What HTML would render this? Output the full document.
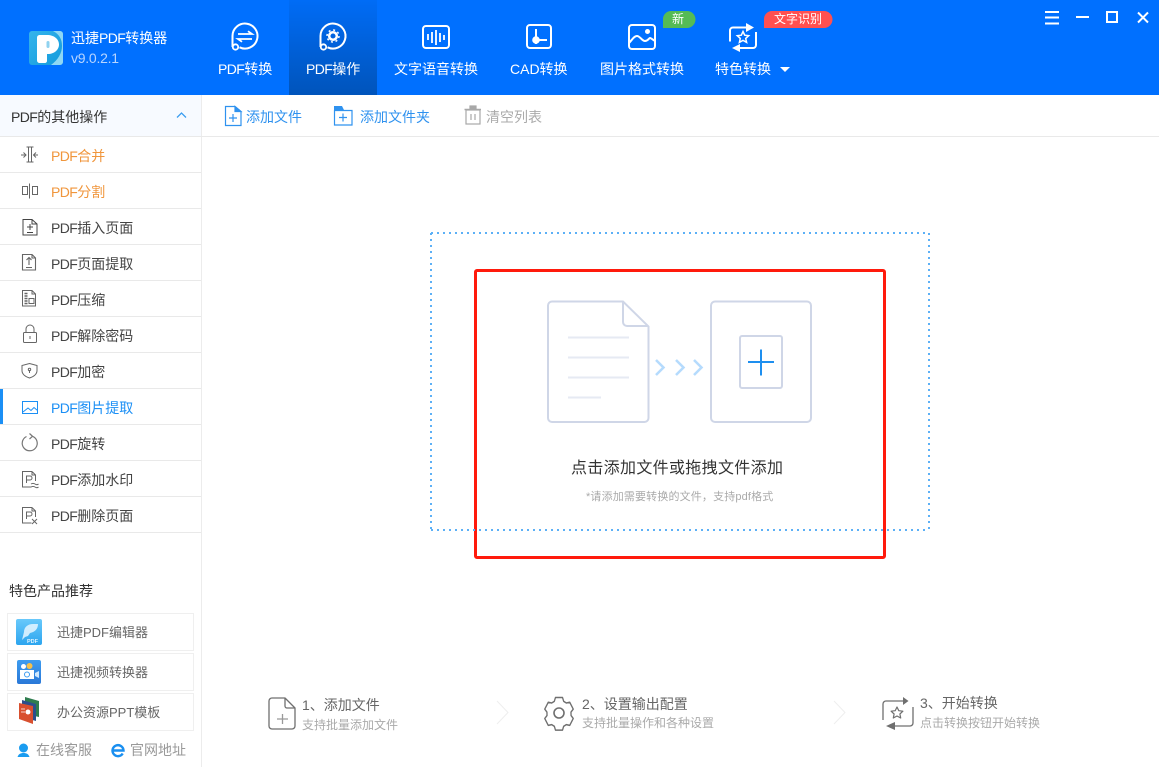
<!DOCTYPE html>
<html><head><meta charset="utf-8">
<style>
html,body{margin:0;padding:0;background:#fff}
body{width:1159px;height:767px;position:relative;overflow:hidden;font-family:"Liberation Sans","Noto Sans CJK SC",sans-serif;font-size:14px;color:#444}
.t{position:absolute;white-space:nowrap;line-height:20px;height:20px}
.a{position:absolute}
svg{position:absolute;overflow:visible;left:0;top:0}
.w{color:#fff}
.p{letter-spacing:-.6px}
.line{position:absolute;left:0;width:201px;height:1px;background:#e9e9e9}
.card{position:absolute;left:7px;width:185px;height:36px;border:1px solid #efefef}
</style></head><body>
<div class="a" style="left:0;top:0;width:1159px;height:95px;background:#0070ff"></div>
<div class="a" style="left:289px;top:0;width:88px;height:95px;background:linear-gradient(#006cf6,#0054bb)"></div>
<div class="a" style="left:0;top:95px;width:201px;height:41px;background:#f7faff"></div>
<div class="a" style="left:201px;top:95px;width:1px;height:672px;background:#ececec"></div>
<div class="a" style="left:0;top:136px;width:1159px;height:1px;background:#e9e9e9"></div>
<div class="line" style="top:172px"></div><div class="line" style="top:208px"></div><div class="line" style="top:244px"></div><div class="line" style="top:280px"></div><div class="line" style="top:316px"></div><div class="line" style="top:352px"></div><div class="line" style="top:388px"></div><div class="line" style="top:424px"></div><div class="line" style="top:460px"></div><div class="line" style="top:496px"></div><div class="line" style="top:532px"></div>
<div class="a" style="left:0;top:389px;width:3px;height:35px;background:#1b8ff5"></div>
<div class="card" style="top:613px"></div><div class="card" style="top:653px"></div><div class="card" style="top:693px"></div>
<div class="a" style="left:474px;top:269px;width:406px;height:284px;border:3px solid #ff1a0c;border-radius:3px"></div>

<svg width="1159" height="767" fill="none" stroke-linecap="butt">
<defs><linearGradient id="lg" x1="0" y1="0" x2="1" y2="1"><stop offset="0" stop-color="#35b4ec"/><stop offset="1" stop-color="#129bdc"/></linearGradient>
<linearGradient id="lg2" x1="0" y1="0" x2="0" y2="1"><stop offset="0" stop-color="#69c9fb"/><stop offset="1" stop-color="#2ca5ef"/></linearGradient>
<linearGradient id="lg3" x1="0" y1="0" x2="0" y2="1"><stop offset="0" stop-color="#3d9cf0"/><stop offset="1" stop-color="#2a78d8"/></linearGradient></defs>
<!-- logo -->
<rect x="29" y="31" width="34" height="34" rx="3" fill="url(#lg)"/>
<path d="M53 31h7a3 3 0 0 1 3 3v28a3 3 0 0 1-3 3h-9c7-5 11-12 11-19 0-7-3-12-9-15z" fill="#8fd8f4"/>
<path d="M37 38c0-2 1-3 3-3h7c7 0 12 4 12 9.500s-5 9.500-11 9.500h-1v7c0 1-1 2-2 2h-5c-2 0-3-1-3-3z" fill="#fff"/>
<rect x="46.500" y="41" width="3" height="7" rx="1.500" fill="#8fd2ef"/>
<!-- nav icons -->
<g stroke="#fff" stroke-width="2">
<path d="M232.500 47V36a12.500 12.500 0 1 1 7 11.300"/><circle cx="235.500" cy="47" r="2.700" stroke-width="1.800"/>
<path d="M238 34h14l-4-2.800M252 39h-14l4 2.800" stroke-width="1.800"/>
<path d="M320.500 47V36a12.500 12.500 0 1 1 7 11.300"/><circle cx="323.500" cy="47" r="2.700" stroke-width="1.800"/>
<circle cx="333" cy="36" r="3.800" stroke-width="2.500"/><circle cx="333" cy="36" r="6" stroke-width="1.500" stroke-dasharray="2 2.700"/>
<rect x="423" y="26" width="26" height="22" rx="3"/>
<path d="M428 34v6M432 32v11M436 30v15M440 33v9M444 35v5" stroke-width="1.800"/>
<rect x="527" y="25" width="24" height="23" rx="3"/>
<path d="M536 29v15M536 40h11"/><circle cx="536" cy="40" r="2.800" fill="#fff"/>
<rect x="629" y="25" width="26" height="24" rx="3"/>
<path d="M629 43c3-3 5-7 8-7s5 5 8 5 4-3 5-3 3 2 5 3"/><circle cx="647.500" cy="31.500" r="2.500" fill="#fff" stroke="none"/>
<path d="M746 27.500h-13a3 3 0 0 0-3 3v11M756 32v13a3 3 0 0 1-3 3h-13"/>
<path d="M746 23l8 4.500-8 4.500zM740 44l-8 4 8 4z" fill="#fff" stroke="none"/>
<path d="M743 31.500l1.700 3.700 4 .5-3 2.700.9 4-3.600-2-3.600 2 .9-4-3-2.700 4-.5z" stroke-width="1.500"/>
</g>
<path d="M780 67h10l-5 5z" fill="#fff"/>
<path d="M663 28v-9a8 8 0 0 1 8-8h16a8 8 0 0 1 0 17z" fill="#55bb55"/>
<path d="M764 28v-9a8 8 0 0 1 8-8h52a8 8 0 0 1 0 17z" fill="#ff5050"/>
<!-- window -->
<path d="M1045 12h14M1045 17.500h14M1045 23.500h14M1076 17h13" stroke="#fff" stroke-width="2"/>
<rect x="1107" y="12" width="10" height="10" stroke="#fff" stroke-width="2"/>
<path d="M1138 12.500l10 10M1148 12.500l-10 10" stroke="#fff" stroke-width="2"/>
<!-- toolbar -->
<path d="M177 117.500l4.500-4.500 4.500 4.500" stroke="#3b9df0" stroke-width="1.300"/>
<g stroke="#2f92ef" stroke-width="1.200"><path d="M235 106.500h-9.500v19h15.500v-14z"/><path d="M235 106.500v5h6z" fill="#2f92ef"/><path d="M229 118h8M233 114v8"/>
<path d="M334.500 110.500h17.500v14.500h-17.500z"/><path d="M334 106h8l2 4h-10z" fill="#2f92ef" stroke="none"/><path d="M339 117.500h8M343 113.500v8"/></g>
<g stroke="#a8a8a8" stroke-width="1.200"><rect x="466" y="110" width="14" height="14"/><path d="M471 114v6M475 114v6"/><path d="M464.500 109.500h16.500" stroke-width="1.500"/><rect x="470" y="106" width="6" height="3" fill="#a8a8a8"/></g>
<!-- sidebar icons -->
<g stroke="#666" stroke-width="1">
<path d="M28.500 147v15M31.500 147v15M26.500 147h7M26.500 162h7M21 155h5M23.500 152.500l2.500 2.500-2.500 2.500M38 155h-4.500M36 152.500l-2.500 2.500 2.500 2.500"/>
<rect x="22.500" y="186.500" width="5" height="8"/><rect x="32.500" y="186.500" width="5" height="8"/><path d="M29.500 183.500v15"/>
<g stroke="#444"><path d="M32 219.500h-9v15.500h14v-11zM32 219.500v4.500h5"/><path d="M27 227h6M30 224v6M27 232.500h6"/></g>
<path d="M32 254.500h-9.500v15.500h13v-12zM32 254.500v3.500h3.500M29 265v-7M26.500 260l2.500-2.500 2.500 2.500M26 267.500h6" stroke-width="1.100"/>
<path d="M32 290.500h-9.500v15.500h13v-12zM32 290.500v3.500h3.500"/>
<path d="M24.500 293.500h3M24.500 296h3M24.500 298.500h3M24.500 301h3M24.500 303.500h3" stroke-width="1.400"/>
<path d="M29 298.500h5v5h-5z" stroke-width="1"/>
<rect x="23.500" y="332.500" width="13" height="10" rx="1"/><path d="M26 332v-3a4 4 0 0 1 8 0v3M30 336v3"/>
<path d="M29.500 363.500l7.500 2v5c0 3.500-3 6-7.500 7.500-4.500-1.500-7.500-4-7.500-7.500v-5z"/><path d="M29.500 370v3"/><circle cx="29.500" cy="369.500" r="1.200"/>
<g stroke="#1b8ff5"><rect x="22.500" y="401.500" width="15" height="12"/><path d="M23 412l5-4 3 2.500 3-3 3.500 3"/></g>
<path d="M26.500 436.500a7.500 7.500 0 1 0 6-.2M29.500 433.500l3 2.800-3 2.700" stroke="#777" stroke-width="1.200"/>
<path d="M32 471.500h-9.500v15.500h9M32 471.500l3.500 3.500v6M32 471.500v3.500h3.500M26.500 483v-7h3.500a2 2 0 0 1 0 4h-3.500M31 484c1.500-1 2.500-1 4 0s2.500 1 3.500 0M31 487c1.500-1 2.500-1 4 0s2.500 1 3.500 0"/>
<path d="M32 507.500h-9.500v15.500h9M32 507.500l3.500 3.500v6M32 507.500v3.500h3.500M26.500 519v-7h3.500a2 2 0 0 1 0 4h-3.500M32 519l5 5M37 519l-5 5"/>
</g>
<!-- dotted -->
<path d="M431 233H929M431 530H929M431 233V531M929 233V531" stroke="#5cb0f6" stroke-width="2" stroke-dasharray="2 4"/>
<!-- illustration -->
<g stroke="#cfd6e7" stroke-width="2"><path d="M623 301.500H552a4 4 0 0 0-4 4V418a4 4 0 0 0 4 4h92.500a4 4 0 0 0 4-4V326.500z"/>
<path d="M623 301.500V322a4 4 0 0 0 4 4h21.500"/>
<rect x="711" y="301.500" width="100" height="120.500" rx="4"/><rect x="740" y="336" width="42" height="52" rx="2"/></g>
<path d="M568 337.500h61M568 357.500h61M568 377.500h61M568 397.500h33" stroke="#e6eaf3" stroke-width="2"/>
<path d="M656 360l7.500 7.500-7.500 7.500M676 360l7.500 7.500-7.500 7.500M694 360l7.500 7.500-7.500 7.500" stroke="#b5dbfd" stroke-width="2.500"/>
<path d="M748 362h26M761 349.500v26" stroke="#1e8fef" stroke-width="2"/>
<!-- products -->
<rect x="16" y="619" width="26" height="26" rx="2" fill="url(#lg2)"/>
<path d="M22 640l2-8c0-5 4-8 9-8h5c0 5-3 8-8 9l-2 3-3 1z" fill="#dff3ff" opacity=".9"/>
<text x="27" y="643" font-size="5.500" font-weight="bold" fill="#dff3ff">PDF</text>
<rect x="17" y="660" width="24" height="24" rx="2" fill="url(#lg3)"/>
<rect x="20" y="670" width="14" height="9" fill="#fff"/><circle cx="23.500" cy="666.500" r="2.500" fill="#fff"/><circle cx="29.500" cy="666" r="3" fill="#f5c04a"/><path d="M35 673l4-2v7l-4-2z" fill="#cfe8ff"/><circle cx="27" cy="674.500" r="2.500" stroke="#3d9cf0"/>
<path d="M25 697l14 4v16l-14-3z" fill="#2f7d4f"/><path d="M22 700l14 4v17l-14-4z" fill="#2b4f8c"/><path d="M19 703l14 3v18l-14-5z" fill="#d8502f"/><circle cx="28" cy="712" r="2.500" fill="#fff"/><path d="M21 709h4M21 712h4" stroke="#fff" stroke-width=".8"/>
<circle cx="23.500" cy="748" r="4.500" fill="#1a9cf0"/><path d="M17.500 757c1-3 3-4 6-4s5 1 6 4z" fill="#1a9cf0"/>
<path d="M113 750.500h10.500a5.500 5.500 0 1 0-.8 3" stroke="#1a8ff0" stroke-width="2.400"/>
<!-- steps -->
<g stroke="#6f6f6f" stroke-width="1.300" stroke-linejoin="round">
<path d="M285 698h-13a3 3 0 0 0-3 3v25a3 3 0 0 0 3 3h20a3 3 0 0 0 3-3v-18z"/><path d="M285 698v8a2 2 0 0 0 2 2h8"/><path d="M277 719h11M282.500 714v10" stroke="#999"/>
<circle cx="559" cy="713" r="5" stroke-width="1.600"/>
<path d="M555 698h8l1.300 3.800 3 1.700 3.900-.8 4 6.900-2.600 3 .1 3.400 2.500 3-4 6.900-3.900-.8-3 1.700-1.300 3.800h-8l-1.300-3.800-3-1.700-3.900.8-4-6.900 2.600-3-.1-3.400-2.500-3 4-6.900 3.900.8 3-1.700z" stroke-width="1.500" transform="translate(559 713) scale(.88 1) translate(-559 -713.500)"/>
<path d="M903 701H886a3 3 0 0 0-3 3v16M913 707v16a3 3 0 0 1-3 3H895"/>
<path d="M903 697l5.500 4-5.500 4zM895 722l-9 4 9 4z" fill="#6f6f6f" stroke="none"/>
<path d="M897 707l1.800 3.700 4.100.5-3 2.800.8 4-3.700-2-3.700 2 .8-4-3-2.800 4.100-.5z" stroke-width="1.200"/>
</g>
<path d="M497 701l11 11.500-11 11.500M834 701l11 11.500-11 11.500" stroke="#eeeeee" stroke-width="1"/>
</svg>

<!-- header text -->
<div class="t w" style="left:71px;top:28px">迅捷<span class="p">PDF</span>转换器</div>
<div class="t" style="left:71px;top:48px;color:#b7d5ff;letter-spacing:-.25px">v9.0.2.1</div>
<div class="t w" style="left:218px;top:59px"><span class="p">PDF</span>转换</div>
<div class="t w" style="left:306px;top:59px"><span class="p">PDF</span>操作</div>
<div class="t w" style="left:394px;top:59px">文字语音转换</div>
<div class="t w" style="left:510px;top:59px">CAD转换</div>
<div class="t w" style="left:600px;top:59px">图片格式转换</div>
<div class="t w" style="left:715px;top:59px">特色转换</div>
<div class="t w" style="left:672px;top:9px;font-size:12px">新</div>
<div class="t w" style="left:774px;top:9px;font-size:12px">文字识别</div>
<!-- toolbar text -->
<div class="t" style="left:11px;top:107px;color:#333"><span class="p">PDF</span>的其他操作</div>
<div class="t" style="left:246px;top:107px;color:#2f92ef">添加文件</div>
<div class="t" style="left:360px;top:107px;color:#2f92ef">添加文件夹</div>
<div class="t" style="left:486px;top:107px;color:#aaa">清空列表</div>
<!-- side items -->
<div class="t" style="left:51px;top:146px;color:#f0963c"><span class="p">PDF</span>合并</div>
<div class="t" style="left:51px;top:182px;color:#f0963c"><span class="p">PDF</span>分割</div>
<div class="t" style="left:51px;top:218px"><span class="p">PDF</span>插入页面</div>
<div class="t" style="left:51px;top:254px"><span class="p">PDF</span>页面提取</div>
<div class="t" style="left:51px;top:290px"><span class="p">PDF</span>压缩</div>
<div class="t" style="left:51px;top:326px"><span class="p">PDF</span>解除密码</div>
<div class="t" style="left:51px;top:362px"><span class="p">PDF</span>加密</div>
<div class="t" style="left:51px;top:398px;color:#1b8ff5"><span class="p">PDF</span>图片提取</div>
<div class="t" style="left:51px;top:434px"><span class="p">PDF</span>旋转</div>
<div class="t" style="left:51px;top:470px"><span class="p">PDF</span>添加水印</div>
<div class="t" style="left:51px;top:506px"><span class="p">PDF</span>删除页面</div>
<div class="t" style="left:9px;top:581px;color:#333">特色产品推荐</div>
<div class="t" style="left:57px;top:623px;font-size:13px;color:#666">迅捷PDF编辑器</div>
<div class="t" style="left:57px;top:663px;font-size:13px;color:#666">迅捷视频转换器</div>
<div class="t" style="left:57px;top:703px;font-size:13px;color:#666">办公资源PPT模板</div>
<div class="t" style="left:36px;top:740px;color:#999">在线客服</div>
<div class="t" style="left:130px;top:740px;color:#999">官网地址</div>
<!-- center text -->
<div class="t" style="left:571px;top:459px;font-size:16px;letter-spacing:.33px;color:#333">点击添加文件或拖拽文件添加</div>
<div class="t" style="left:586px;top:487px;font-size:11px;letter-spacing:.15px;color:#aaa">*请添加需要转换的文件，支持pdf格式</div>
<!-- steps text -->
<div class="t" style="left:302px;top:695px;color:#666">1、添加文件</div>
<div class="t" style="left:302px;top:715px;font-size:12px;color:#aaa">支持批量添加文件</div>
<div class="t" style="left:582px;top:694px;color:#666">2、设置输出配置</div>
<div class="t" style="left:582px;top:713px;font-size:12px;color:#aaa">支持批量操作和各种设置</div>
<div class="t" style="left:920px;top:693px;color:#666">3、开始转换</div>
<div class="t" style="left:920px;top:713px;font-size:12px;color:#aaa">点击转换按钮开始转换</div>
</body></html>
